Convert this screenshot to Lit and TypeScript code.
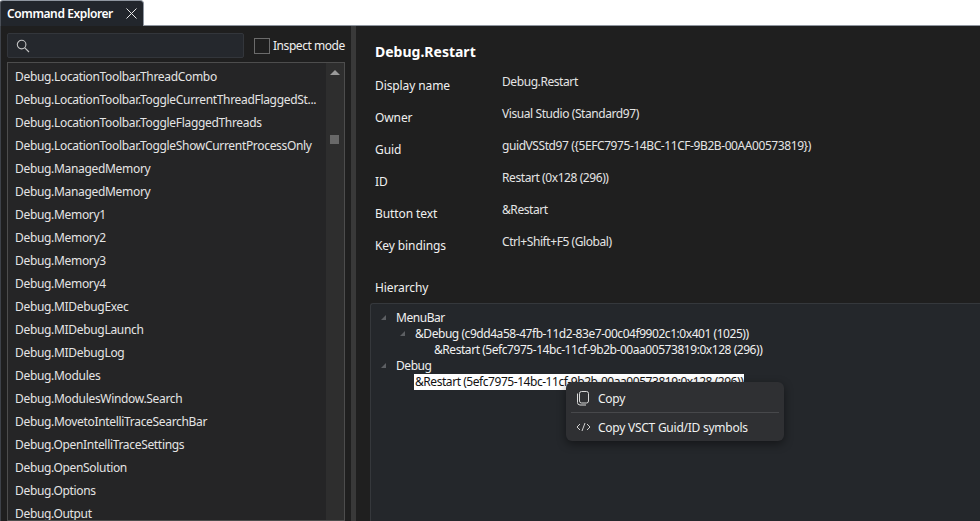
import { LitElement, html, css, svg } from "lit";
import { customElement } from "lit/decorators.js";

const COMMANDS = [
  "Debug.LocationToolbar.ThreadCombo",
  "Debug.LocationToolbar.ToggleCurrentThreadFlaggedSt...",
  "Debug.LocationToolbar.ToggleFlaggedThreads",
  "Debug.LocationToolbar.ToggleShowCurrentProcessOnly",
  "Debug.ManagedMemory",
  "Debug.ManagedMemory",
  "Debug.Memory1",
  "Debug.Memory2",
  "Debug.Memory3",
  "Debug.Memory4",
  "Debug.MIDebugExec",
  "Debug.MIDebugLaunch",
  "Debug.MIDebugLog",
  "Debug.Modules",
  "Debug.ModulesWindow.Search",
  "Debug.MovetoIntelliTraceSearchBar",
  "Debug.OpenIntelliTraceSettings",
  "Debug.OpenSolution",
  "Debug.Options",
  "Debug.Output",
];

const PROPS: [string, string][] = [
  ["Display name", "Debug.Restart"],
  ["Owner", "Visual Studio (Standard97)"],
  ["Guid", "guidVSStd97 ({5EFC7975-14BC-11CF-9B2B-00AA00573819})"],
  ["ID", "Restart (0x128 (296))"],
  ["Button text", "&Restart"],
  ["Key bindings", "Ctrl+Shift+F5 (Global)"],
];

const TREE: { depth: number; arrow: boolean; text: string; selected?: boolean }[] = [
  { depth: 0, arrow: true, text: "MenuBar" },
  { depth: 1, arrow: true, text: "&Debug (c9dd4a58-47fb-11d2-83e7-00c04f9902c1:0x401 (1025))" },
  { depth: 2, arrow: false, text: "&Restart (5efc7975-14bc-11cf-9b2b-00aa00573819:0x128 (296))" },
  { depth: 0, arrow: true, text: "Debug" },
  { depth: 1, arrow: false, text: "&Restart (5efc7975-14bc-11cf-9b2b-00aa00573819:0x128 (296))", selected: true },
];

@customElement("app-root")
export class AppRoot extends LitElement {
  static styles = css`
    :host {
      display: block;
      width: 980px;
      height: 521px;
      overflow: hidden;
      background: #1f1f1f;
      color: #f0f0f0;
      font-family: "Noto Sans", "Open Sans", sans-serif;
      font-size: 12px;
    }
    .header {
      display: flex;
      height: 26px;
      box-sizing: border-box;
      background: #fff;
      border-bottom: 1px solid #8f96a0;
    }
    .tab {
      display: flex;
      align-items: center;
      justify-content: space-between;
      box-sizing: border-box;
      width: 144px;
      height: 26px;
      padding: 0 6px 0 7px;
      background: #22262c;
      border: 1px solid #8f96a0;
      border-bottom: none;
      border-left-color: #4a4f57;
      border-top-left-radius: 3px;
      border-top-right-radius: 4px;
      font-weight: 600;
      color: #fff;
      letter-spacing: -0.4px;
    }
    .tab span { margin-left: -1px; }
    .tab svg { display: block; }
    .main {
      display: flex;
      height: 495px;
    }
    .left {
      box-sizing: border-box;
      width: 351px;
      padding: 7px 6px 0 6px;
      border-left: 1px solid #3d4148;
      display: flex;
      flex-direction: column;
      gap: 4px;
      flex: none;
    }
    .tools {
      display: flex;
      align-items: center;
      height: 25px;
      flex: none;
    }
    .search {
      box-sizing: border-box;
      width: 237px;
      height: 25px;
      flex: none;
      background: #25282d;
      border: 1px solid #33363b;
      border-radius: 2px;
      display: flex;
      align-items: center;
      padding-left: 8px;
    }
    .check {
      box-sizing: border-box;
      width: 16px;
      height: 16px;
      margin-left: 10px;
      border: 1px solid #6b6b6b;
      background: #1f1f1f;
      flex: none;
    }
    .check-label { margin-left: 3px; white-space: nowrap; letter-spacing: -0.45px; }
    .list {
      flex: 1;
      box-sizing: border-box;
      border: 1px solid #4d4d4d;
      background: #252526;
      display: flex;
      min-height: 0;
      overflow: hidden;
      width: 338px;
    }
    .rows { flex: 1; padding-top: 2px; padding-left: 7px; }
    .row {
      height: 23px;
      line-height: 23px;
      white-space: nowrap;
      color: #e4e4e4;
      letter-spacing: -0.32px;
    }
    .scroll {
      position: relative;
      width: 18px;
      flex: none;
      background: #2e2e2e;
    }
    .scroll .up {
      position: absolute;
      left: 4px;
      top: 7px;
      width: 0;
      height: 0;
      border-left: 5px solid transparent;
      border-right: 5px solid transparent;
      border-bottom: 5px solid #9a9a9a;
    }
    .scroll .thumb {
      position: absolute;
      left: 4px;
      top: 72px;
      width: 9px;
      height: 9px;
      background: #686868;
    }
    .splitter {
      width: 5px;
      flex: none;
      background: #393939;
    }
    .right {
      flex: 1;
      min-width: 0;
      display: flex;
      flex-direction: column;
      padding: 16px 0 0 19px;
    }
    .title {
      font-size: 14px;
      font-weight: 700;
      line-height: 20px;
      color: #fff;
      margin-bottom: 11px;
    }
    .props {
      display: grid;
      grid-template-columns: 127px 1fr;
      grid-auto-rows: 32px;
    }
    .props .k { padding-top: 5px; line-height: 16px; letter-spacing: -0.1px; }
    .props .v { padding-top: 1px; line-height: 16px; color: #e4e4e4; letter-spacing: -0.42px; }
    .hier { margin-top: 15px; line-height: 16px; letter-spacing: -0.1px; }
    .tree {
      position: relative;
      flex: 1;
      margin: 7px 0 0 -5px;
      background: #24272b;
      border: 1px solid #35383c;
      border-right: none;
      border-bottom: none;
      border-top-left-radius: 3px;
      padding: 6px 0 0 9px;
    }
    .node {
      display: flex;
      align-items: center;
      height: 16px;
      line-height: 16px;
      white-space: nowrap;
      color: #f0f0f0;
      letter-spacing: -0.45px;
    }
    .arrow { width: 15px; flex: none; display: block; }
    .text { padding: 0 1px; }
    .text.sel { background: #fff; color: #111; }
    .menu {
      position: absolute;
      left: 195px;
      top: 78px;
      width: 218px;
      box-sizing: border-box;
      padding: 2px 5px 0;
      background: #2f3033;
      border-radius: 6px;
      box-shadow: 0 3px 10px rgba(0, 0, 0, 0.45);
      color: #f0f0f0;
      letter-spacing: -0.25px;
    }
    .item {
      display: flex;
      align-items: center;
      height: 28px;
      padding-left: 5px;
      gap: 7px;
    }
    .item svg { display: block; flex: none; }
    .sep { height: 1px; background: #47484b; }
  `;

  private depthPad(depth: number) {
    return `margin-left:${depth * 19}px`;
  }

  render() {
    return html`
      <div class="header">
        <div class="tab">
          <span>Command Explorer</span>
          <svg width="11" height="11" viewBox="0 0 11 11" fill="none" stroke="#e8e8e8" stroke-width="1"><path d="M0.5 0.5 L10.5 10.5 M10.5 0.5 L0.5 10.5"/></svg>
        </div>
      </div>
      <div class="main">
        <div class="left">
          <div class="tools">
            <div class="search">
              <svg width="14" height="14" viewBox="0 0 14 14" fill="none" stroke="#c4c4c4" stroke-width="1.1"><circle cx="5.6" cy="5.6" r="4.3"/><path d="M8.8 8.8 L13 13"/></svg>
            </div>
            <div class="check"></div>
            <span class="check-label">Inspect mode</span>
          </div>
          <div class="list">
            <div class="rows">${COMMANDS.map((c) => html`<div class="row">${c}</div>`)}</div>
            <div class="scroll"><div class="up"></div><div class="thumb"></div></div>
          </div>
        </div>
        <div class="splitter"></div>
        <div class="right">
          <div class="title">Debug.Restart</div>
          <div class="props">
            ${PROPS.map(([k, v]) => html`<div class="k">${k}</div><div class="v">${v}</div>`)}
          </div>
          <div class="hier">Hierarchy</div>
          <div class="tree">
            ${TREE.map(
              (n) => html`<div class="node" style=${this.depthPad(n.depth)}>
                ${n.arrow
                  ? html`<svg class="arrow" height="6" viewBox="0 0 15 6">${svg`<path d="M6 0 V5 H1 Z" fill="#5c5f63"/>`}</svg>`
                  : html`<span class="arrow"></span>`}
                <span class="text ${n.selected ? "sel" : ""}">${n.text}</span>
              </div>`
            )}
            <div class="menu">
              <div class="item">
                <svg width="15" height="16" viewBox="0 0 15 16" fill="none" stroke="#d8d8d8" stroke-width="1"><rect x="3.5" y="1.5" width="9" height="11.5" rx="2"/><path d="M1.5 3.5 V12.5 A2.5 2.5 0 0 0 4 15 H10"/></svg>
                <span>Copy</span>
              </div>
              <div class="sep"></div>
              <div class="item">
                <svg width="15" height="16" viewBox="0 0 15 16" fill="none" stroke="#d0d0d0" stroke-width="1"><path d="M4 5 L1 8 L4 11 M11 5 L14 8 L11 11 M9 4 L6 12"/></svg>
                <span>Copy VSCT Guid/ID symbols</span>
              </div>
            </div>
          </div>
        </div>
      </div>
    `;
  }
}
